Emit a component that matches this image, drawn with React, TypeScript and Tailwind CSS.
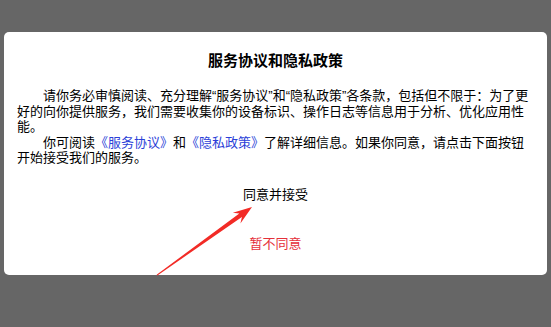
export default function App() {
  return (
    <div
      className="relative w-[551px] h-[327px] bg-[#666666] pt-[32px] pl-[4px] overflow-hidden"
      style={{ fontFamily: '"Liberation Sans", "Noto Sans CJK SC", sans-serif' }}
    >
      <div className="w-[543px] h-[243px] bg-white rounded-[5px] px-[13px] pt-[20px] flex flex-col">
        <h1 className="text-center text-[15px] leading-[18px] font-bold text-black">
          服务协议和隐私政策
        </h1>
        <div className="mt-[18px] text-[13px] leading-[15.5px] text-black">
          <p className="indent-[2em]">
            请你务必审慎阅读、充分理解“服务协议”和“隐私政策”各条款，包括但不限于：为了更好的向你提供服务，我们需要收集你的设备标识、操作日志等信息用于分析、优化应用性能。
          </p>
          <p className="indent-[2em]">
            你可阅读<span className="text-[#2b3fd8]">《服务协议》</span>和<span className="text-[#2b3fd8]">《隐私政策》</span>了解详细信息。如果你同意，请点击下面按钮开始接受我们的服务。
          </p>
        </div>
        <button className="mt-[14.5px] h-[30px] leading-[30px] text-[13px] text-black self-center px-4">
          同意并接受
        </button>
        <button className="mt-[19px] h-[30px] leading-[30px] text-[13px] text-[#e5303a] self-center px-4">
          暂不同意
        </button>
      </div>

      {/* annotation arrow */}
      <svg
        className="absolute left-0 top-0 pointer-events-none"
        width="551"
        height="327"
        viewBox="0 0 551 327"
      >
        <polygon
          points="157.4,275.5 241.9,216.9 240.4,223.4 252,207 232.8,212.8 239.3,213.4 156.6,274.8"
          fill="#f22b26"
        />
      </svg>
    </div>
  );
}
